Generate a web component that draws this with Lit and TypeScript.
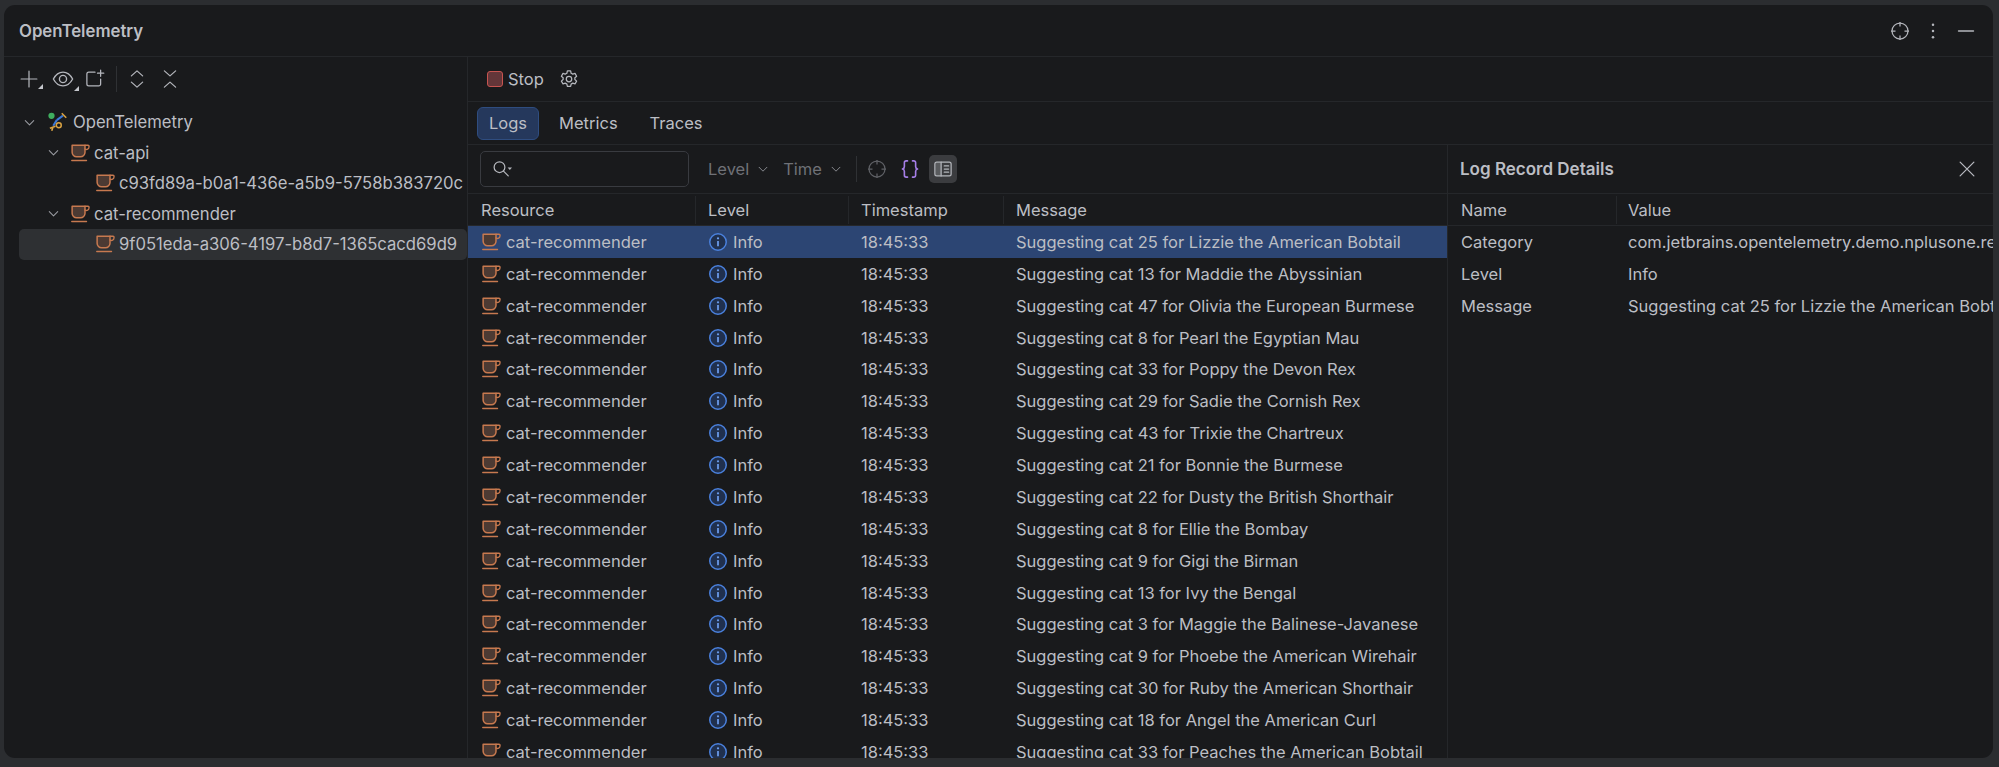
import { LitElement, css, html, svg } from "lit";
import { customElement, state } from "lit/decorators.js";
import { classMap } from "lit/directives/class-map.js";

const MESSAGES = [
  "Suggesting cat 25 for Lizzie the American Bobtail",
  "Suggesting cat 13 for Maddie the Abyssinian",
  "Suggesting cat 47 for Olivia the European Burmese",
  "Suggesting cat 8 for Pearl the Egyptian Mau",
  "Suggesting cat 33 for Poppy the Devon Rex",
  "Suggesting cat 29 for Sadie the Cornish Rex",
  "Suggesting cat 43 for Trixie the Chartreux",
  "Suggesting cat 21 for Bonnie the Burmese",
  "Suggesting cat 22 for Dusty the British Shorthair",
  "Suggesting cat 8 for Ellie the Bombay",
  "Suggesting cat 9 for Gigi the Birman",
  "Suggesting cat 13 for Ivy the Bengal",
  "Suggesting cat 3 for Maggie the Balinese-Javanese",
  "Suggesting cat 9 for Phoebe the American Wirehair",
  "Suggesting cat 30 for Ruby the American Shorthair",
  "Suggesting cat 18 for Angel the American Curl",
  "Suggesting cat 33 for Peaches the American Bobtail",
];

const icon = (size: number, body: unknown) => html`
  <svg class="icon" width=${size} height=${size} viewBox="0 0 16 16" fill="none"
    stroke="#b4b6bc" stroke-width="1" stroke-linecap="round" stroke-linejoin="round">${body}</svg>
`;

const cup = () => icon(20, svg`
  <path d="M1.700 1.800h10.300v5.600a3.600 3.600 0 0 1-3.600 3.600H5.300a3.600 3.600 0 0 1-3.600-3.600z" fill="#4c3a33" stroke="#c7794f" stroke-width="1.200"/>
  <path d="M12 1.800h2.500a.7.700 0 0 1 .7.700v.6a2 2 0 0 1-3.200 1.700" stroke="#c7794f" stroke-width="1.100"/>
  <path d="M1.400 14h11.800" stroke="#c7794f" stroke-width="1.100"/>
`);

const chevron = (size = 16, color = "#9a9ca2") => html`
  <svg class="icon" width=${size} height=${size} viewBox="0 0 16 16" fill="none"
    stroke=${color} stroke-width="1.100" stroke-linecap="round" stroke-linejoin="round">
    <path d="M3.500 6l4.500 4.500L12.500 6"/>
  </svg>
`;

const locate = (color = "#b4b6bc") => html`
  <svg class="icon" width="20" height="20" viewBox="0 0 16 16" fill="none" stroke=${color} stroke-width="1">
    <circle cx="8" cy="8" r="6.400"/>
    <path d="M8 .800v3.600M8 11.600v3.600M.800 8h3.600M11.600 8h3.600"/>
  </svg>
`;

const infoIcon = () => html`
  <svg class="icon" width="20" height="20" viewBox="0 0 16 16" fill="none">
    <circle cx="8" cy="8" r="6.600" fill="#20304e" stroke="#4a80dc" stroke-width="1.200"/>
    <circle cx="8" cy="5" r=".900" fill="#6c9cec"/>
    <path d="M8 7.200v4.200" stroke="#6c9cec" stroke-width="1.400"/>
  </svg>
`;

@customElement("app-root")
export class AppRoot extends LitElement {
  @state()
  selected = 0;

  static styles = css`
    :host {
      display: block;
      width: 1999px;
      height: 767px;
      box-sizing: border-box;
      padding: 5px 6px 9px 4px;
      background: #2b2d30;
      color: #bcbec4;
      font-family: Inter, "Liberation Sans", sans-serif;
      font-size: 16.5px;
      overflow: hidden;
    }

    .icon {
      display: block;
      flex: none;
    }

    .panel {
      height: 100%;
      display: flex;
      flex-direction: column;
      background: #191a1c;
      border-radius: 11px;
      overflow: hidden;
    }

    .title-bar {
      flex: none;
      height: 51px;
      display: flex;
      align-items: center;
      padding: 0 17px 0 15px;
      border-bottom: 1px solid #25272a;
    }

    .title {
      flex: 1;
      font-weight: 600;
      font-size: 16.8px;
    }

    .title-actions {
      display: flex;
      align-items: center;
      gap: 13px;
    }

    .main {
      flex: 1;
      min-height: 0;
      display: flex;
    }

    .side {
      flex: none;
      width: 463px;
      border-right: 1px solid #25272a;
    }

    .side-tools {
      height: 44px;
      display: flex;
      align-items: center;
      padding: 0 0 0 16px;
    }

    .tool {
      position: relative;
      display: flex;
    }

    .tool.more::after {
      content: "";
      position: absolute;
      right: -5px;
      bottom: -1px;
      border-style: solid;
      border-width: 0 0 5px 5px;
      border-color: transparent transparent #c4c6cc transparent;
    }

    .plus {
      margin-right: 14px;
    }

    .eye {
      margin-right: 11px;
    }

    .expand {
      margin-right: 13px;
    }

    .vsep {
      width: 1px;
      height: 26px;
      background: #2f3134;
      margin: 0 10px 0 11px;
    }

    .tree {
      padding-top: 6px;
      font-size: 16.65px;
    }

    .node {
      height: 30.5px;
      display: flex;
      align-items: center;
      gap: 4px;
      margin-left: 15px;
      border-radius: 5px;
      white-space: nowrap;
    }

    .node.current {
      background: #2e3033;
    }

    .node .twist {
      width: 20px;
      display: flex;
      justify-content: center;
      margin-right: 3px;
    }

    .root-icon {
      margin: 0 1px 0 2px;
    }

    .d1 {
      padding-left: 24px;
    }

    .d2 {
      padding-left: 76px;
    }

    .content {
      flex: 1;
      min-width: 0;
      display: flex;
      flex-direction: column;
    }

    .run-bar {
      flex: none;
      height: 44px;
      display: flex;
      align-items: center;
      padding-left: 19px;
      border-bottom: 1px solid #25272a;
    }

    .stop-box {
      width: 16px;
      height: 16px;
      box-sizing: border-box;
      background: #643639;
      border: 1.5px solid #c75450;
      border-radius: 3px;
      margin-right: 5px;
    }

    .gear {
      margin-left: 15px;
    }

    .tabs {
      flex: none;
      height: 42px;
      display: flex;
      align-items: center;
      padding-left: 9px;
      gap: 8px;
      border-bottom: 1px solid #25272a;
    }

    .tab {
      height: 33px;
      box-sizing: border-box;
      display: flex;
      align-items: center;
      padding: 0 11px;
      border-radius: 6px;
      border: 1px solid transparent;
    }

    .tab.active {
      background: #25385c;
      border-color: #2f4d80;
    }

    .body {
      flex: 1;
      min-height: 0;
      display: flex;
    }

    .logs {
      flex: none;
      width: 979px;
      display: flex;
      flex-direction: column;
      min-height: 0;
    }

    .filters {
      flex: none;
      height: 48px;
      display: flex;
      align-items: center;
      padding-left: 12px;
      border-bottom: 1px solid #25272a;
    }

    .search {
      width: 209px;
      height: 36px;
      box-sizing: border-box;
      display: flex;
      align-items: center;
      padding-left: 11px;
      border: 1px solid #393b40;
      border-radius: 5px;
      margin-right: 19px;
    }

    .combo {
      display: flex;
      align-items: center;
      gap: 7px;
      color: #6f7177;
      margin-right: 13px;
    }

    .filter-sep {
      width: 1px;
      height: 26px;
      background: #2f3134;
      margin: 0 6px 0 0;
    }

    .filter-icon {
      width: 28px;
      height: 28px;
      display: flex;
      align-items: center;
      justify-content: center;
      border-radius: 5px;
      margin-right: 5px;
    }

    .filter-icon.on {
      background: #3b3c3f;
    }

    .grid-row {
      display: grid;
      grid-template-columns: 227px 153px 155px 1fr;
      align-items: center;
    }

    .thead {
      flex: none;
      height: 31px;
      border-bottom: 1px solid #25272a;
    }

    .th {
      height: 28px;
      display: flex;
      align-items: center;
      padding-left: 12px;
      border-left: 1px solid #25272a;
    }

    .th:first-child {
      border-left: none;
      padding-left: 13px;
    }

    .rows {
      flex: 1;
      min-height: 0;
      overflow: hidden;
    }

    .row {
      height: 31.875px;
      white-space: nowrap;
    }

    .row.selected {
      background: #2c4573;
    }

    .cell {
      display: flex;
      align-items: center;
      gap: 5px;
      padding-left: 13px;
    }

    .details {
      flex: 1;
      min-width: 0;
      display: flex;
      flex-direction: column;
      border-left: 1px solid #25272a;
      overflow: hidden;
    }

    .details-head {
      flex: none;
      height: 48px;
      display: flex;
      align-items: center;
      justify-content: space-between;
      padding: 0 16px 0 12px;
      border-bottom: 1px solid #25272a;
      font-weight: 600;
      font-size: 17px;
    }

    .kv {
      display: grid;
      grid-template-columns: 168px 1fr;
      align-items: center;
      height: 31.875px;
      white-space: nowrap;
    }

    .kv > div {
      padding-left: 13px;
      overflow: hidden;
    }

    .kv.head {
      height: 31px;
      border-bottom: 1px solid #25272a;
    }

    .kv.head > div + div {
      height: 28px;
      display: flex;
      align-items: center;
      padding-left: 11px;
      border-left: 1px solid #25272a;
    }

    .kv > .val {
      padding-left: 12px;
    }
  `;

  private renderTree() {
    const otIcon = html`
      <svg class="icon root-icon" width="20" height="20" viewBox="0 0 16 16" fill="none" stroke-width="1.100">
        <circle cx="2.800" cy="3" r="2.500" fill="#3fae5f"/>
        <path d="M7 6.500l5-3.600" stroke="#3c79d8" stroke-width="1.600"/>
        <path d="M11 1l3.600 3.600" stroke="#d9a343" stroke-width="1.300"/>
        <path d="M7 6.500L4.200 11" stroke="#3c79d8" stroke-width="1.600"/>
        <circle cx="8.600" cy="10.600" r="2" stroke="#d9a343" stroke-width="1.200"/>
        <path d="M1.500 13l4.500-1.600M3 15l1-3" stroke="#d9a343" stroke-width="1.300"/>
      </svg>
    `;
    return html`
      <div class="tree">
        <div class="node"><span class="twist">${chevron(15)}</span>${otIcon}<span>OpenTelemetry</span></div>
        <div class="node d1"><span class="twist">${chevron(15)}</span>${cup()}<span>cat-api</span></div>
        <div class="node d2">${cup()}<span>c93fd89a-b0a1-436e-a5b9-5758b383720c</span></div>
        <div class="node d1"><span class="twist">${chevron(15)}</span>${cup()}<span>cat-recommender</span></div>
        <div class="node d2 current">${cup()}<span>9f051eda-a306-4197-b8d7-1365cacd69d9</span></div>
      </div>
    `;
  }

  private renderSide() {
    return html`
      <aside class="side">
        <div class="side-tools">
          <span class="tool more plus">${icon(18, svg`<path d="M8 1v14M1 8h14" stroke-width="1.100"/>`)}</span>
          <span class="tool more eye">${icon(22, svg`
            <path d="M1 8c1.800-3.400 4.200-5 7-5s5.200 1.600 7 5c-1.800 3.400-4.200 5-7 5s-5.200-1.600-7-5z"/>
            <circle cx="8" cy="8" r="2.600"/>
          `)}</span>
          <span class="tool">${icon(20, svg`
            <path d="M8 2.500H3a1.500 1.500 0 0 0-1.500 1.500v8a1.500 1.500 0 0 0 1.500 1.500h8a1.500 1.500 0 0 0 1.500-1.500V8"/>
            <path d="M12.500 .800v5M10 3.300h5"/>
          `)}</span>
          <span class="vsep"></span>
          <span class="tool expand">${icon(20, svg`<path d="M3.500 5.500L8 1.500l4.500 4M3.500 10.500l4.500 4 4.500-4"/>`)}</span>
          <span class="tool">${icon(20, svg`<path d="M3.500 1.500L8 5.500l4.500-4M3.500 14.500l4.500-4 4.500 4"/>`)}</span>
        </div>
        ${this.renderTree()}
      </aside>
    `;
  }

  private renderFilters() {
    return html`
      <div class="filters">
        <div class="search">
          ${icon(20, svg`
            <circle cx="6" cy="6.500" r="4.300"/>
            <path d="M9.200 9.700l3.800 3.800"/>
            <path d="M12.500 6.800h3.500l-1.750 2z" fill="#b4b6bc" stroke="none"/>
          `)}
        </div>
        <div class="combo">Level ${chevron(14, "#8a8c92")}</div>
        <div class="combo">Time ${chevron(14, "#8a8c92")}</div>
        <span class="filter-sep"></span>
        <span class="filter-icon">${locate("#5f6166")}</span>
        <span class="filter-icon">
          <svg class="icon" width="20" height="20" viewBox="0 0 16 16" fill="none"
            stroke="#a57ee6" stroke-width="1.300" stroke-linecap="round" stroke-linejoin="round">
            <path d="M6 1.500H5a1.500 1.500 0 0 0-1.500 1.500v3a2 2 0 0 1-1.500 2 2 2 0 0 1 1.500 2v3A1.500 1.500 0 0 0 5 14.500h1"/>
            <path d="M10 1.500h1a1.500 1.500 0 0 1 1.500 1.500v3a2 2 0 0 0 1.500 2 2 2 0 0 0-1.500 2v3a1.500 1.500 0 0 1-1.500 1.500h-1"/>
          </svg>
        </span>
        <span class="filter-icon on">
          ${icon(20, svg`
            <rect x="1.500" y="2.500" width="13" height="11" rx="1.500"/>
            <path d="M6.500 2.500v11M9 5.500h3.500M9 8h3.500M9 10.500h3.500"/>
            <path d="M2 3h4.500v10H2z" fill="#b4b6bc" fill-opacity=".25" stroke="none"/>
          `)}
        </span>
      </div>
    `;
  }

  private renderLogs() {
    return html`
      <section class="logs">
        ${this.renderFilters()}
        <div class="grid-row thead">
          <div class="th">Resource</div>
          <div class="th">Level</div>
          <div class="th">Timestamp</div>
          <div class="th">Message</div>
        </div>
        <div class="rows">
          ${MESSAGES.map(
            (message, i) => html`
              <div class=${classMap({ "grid-row": true, row: true, selected: i === this.selected })}>
                <div class="cell">${cup()}<span>cat-recommender</span></div>
                <div class="cell">${infoIcon()}<span>Info</span></div>
                <div class="cell">18:45:33</div>
                <div class="cell">${message}</div>
              </div>
            `
          )}
        </div>
      </section>
    `;
  }

  private renderDetails() {
    const rows = [
      ["Category", "com.jetbrains.opentelemetry.demo.nplusone.recommender.CatRecommender"],
      ["Level", "Info"],
      ["Message", MESSAGES[this.selected]],
    ];
    return html`
      <section class="details">
        <div class="details-head">
          <span>Log Record Details</span>
          ${icon(20, svg`<path d="M2.500 2.500l11 11M13.500 2.500l-11 11"/>`)}
        </div>
        <div class="kv head"><div>Name</div><div>Value</div></div>
        ${rows.map(
          ([name, value]) => html`<div class="kv"><div>${name}</div><div class="val">${value}</div></div>`
        )}
      </section>
    `;
  }

  render() {
    return html`
      <div class="panel">
        <header class="title-bar">
          <span class="title">OpenTelemetry</span>
          <div class="title-actions">
            ${locate()}
            ${icon(20, svg`
              <circle cx="8" cy="3" r="1" fill="#b4b6bc" stroke="none"/>
              <circle cx="8" cy="8" r="1" fill="#b4b6bc" stroke="none"/>
              <circle cx="8" cy="13" r="1" fill="#b4b6bc" stroke="none"/>
            `)}
            ${icon(20, svg`<path d="M2 8h12" stroke-width="1.100"/>`)}
          </div>
        </header>
        <div class="main">
          ${this.renderSide()}
          <div class="content">
            <div class="run-bar">
              <span class="stop-box"></span>
              <span>Stop</span>
              <span class="gear">${icon(20, svg`
                <circle cx="8" cy="8" r="2.200"/>
                <path d="M6.700 1.500h2.600l.4 1.900 1.300.7 1.800-.6 1.300 2.300-1.400 1.200v1.400l1.400 1.300-1.300 2.200-1.800-.6-1.300.8-.4 1.800H6.700l-.4-1.800-1.300-.8-1.800.6-1.300-2.200 1.400-1.300V7L1.900 5.800l1.300-2.300 1.800.6 1.300-.7z"/>
              `)}</span>
            </div>
            <nav class="tabs">
              <div class="tab active">Logs</div>
              <div class="tab">Metrics</div>
              <div class="tab">Traces</div>
            </nav>
            <div class="body">
              ${this.renderLogs()}
              ${this.renderDetails()}
            </div>
          </div>
        </div>
      </div>
    `;
  }
}
